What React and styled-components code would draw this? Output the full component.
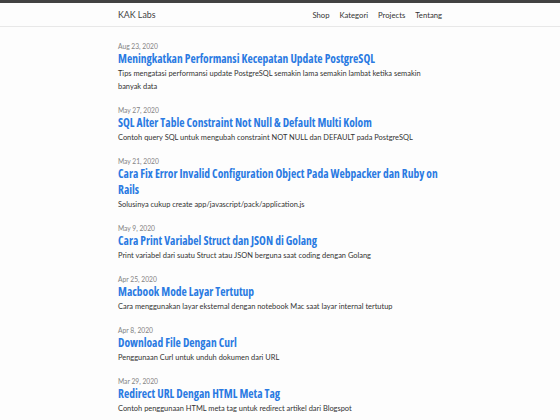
import styled, { createGlobalStyle } from 'styled-components';

const GlobalStyle = createGlobalStyle`
  * { box-sizing: border-box; }
  body {
    margin: 0;
    background: #fdfdfd;
    font-family: Lato, "Noto Sans", sans-serif;
    color: #111111;
  }
`;

const Header = styled.header`
  border-top: 3px solid #424242;
  border-bottom: 1px solid #e8e8e8;
  height: 27px;
`;

const Wrapper = styled.div`
  width: 324px;
  margin: 0 auto;
`;

const HeaderInner = styled(Wrapper)`
  display: flex;
  justify-content: space-between;
  align-items: center;
  height: 23px;
`;

const SiteTitle = styled.a`
  font-size: 8.8px;
  color: #424242;
  text-decoration: none;
`;

const Nav = styled.nav`
  display: flex;
  gap: 10px;
`;

const NavLink = styled.a`
  font-size: 7.7px;
  color: #333333;
  text-decoration: none;
`;

const Main = styled(Wrapper)`
  padding-top: 14px;
`;

const PostList = styled.ul`
  list-style: none;
  margin: 0;
  padding: 0;
`;

const Post = styled.li`
  margin-bottom: 11.5px;
`;

const Meta = styled.span`
  display: block;
  font-size: 6.7px;
  line-height: 10px;
  color: #828282;
`;

const Title = styled.h3`
  margin: 0;
  font-family: "Open Sans", "Noto Sans", sans-serif;
  font-size: 11.5px;
  font-stretch: 75%;
  line-height: 16px;
  font-weight: 700;
`;

const TitleLink = styled.a`
  color: #2a7ae2;
  text-decoration: none;
`;

const Excerpt = styled.p`
  margin: 1px 0 0;
  font-size: 7.45px;
  line-height: 12.5px;
  color: #333333;
`;

const posts = [
  {
    date: 'Aug 23, 2020',
    title: 'Meningkatkan Performansi Kecepatan Update PostgreSQL',
    excerpt: 'Tips mengatasi performansi update PostgreSQL semakin lama semakin lambat ketika semakin banyak data',
  },
  {
    date: 'May 27, 2020',
    title: 'SQL Alter Table Constraint Not Null & Default Multi Kolom',
    excerpt: 'Contoh query SQL untuk mengubah constraint NOT NULL dan DEFAULT pada PostgreSQL',
  },
  {
    date: 'May 21, 2020',
    title: 'Cara Fix Error Invalid Configuration Object Pada Webpacker dan Ruby on Rails',
    excerpt: 'Solusinya cukup create app/javascript/pack/application.js',
  },
  {
    date: 'May 9, 2020',
    title: 'Cara Print Variabel Struct dan JSON di Golang',
    excerpt: 'Print variabel dari suatu Struct atau JSON berguna saat coding dengan Golang',
  },
  {
    date: 'Apr 25, 2020',
    title: 'Macbook Mode Layar Tertutup',
    excerpt: 'Cara menggunakan layar eksternal dengan notebook Mac saat layar internal tertutup',
  },
  {
    date: 'Apr 8, 2020',
    title: 'Download File Dengan Curl',
    excerpt: 'Penggunaan Curl untuk unduh dokumen dari URL',
  },
  {
    date: 'Mar 29, 2020',
    title: 'Redirect URL Dengan HTML Meta Tag',
    excerpt: 'Contoh penggunaan HTML meta tag untuk redirect artikel dari Blogspot',
  },
];

const App = () => {
  return (
    <>
      <GlobalStyle />
      <Header>
        <HeaderInner>
          <SiteTitle href="#">KAK Labs</SiteTitle>
          <Nav>
            <NavLink href="#">Shop</NavLink>
            <NavLink href="#">Kategori</NavLink>
            <NavLink href="#">Projects</NavLink>
            <NavLink href="#">Tentang</NavLink>
          </Nav>
        </HeaderInner>
      </Header>
      <Main>
        <PostList>
          {posts.map((post) => (
            <Post key={post.title}>
              <Meta>{post.date}</Meta>
              <Title>
                <TitleLink href="#">{post.title}</TitleLink>
              </Title>
              <Excerpt>{post.excerpt}</Excerpt>
            </Post>
          ))}
        </PostList>
      </Main>
    </>
  );
};

export default App;
